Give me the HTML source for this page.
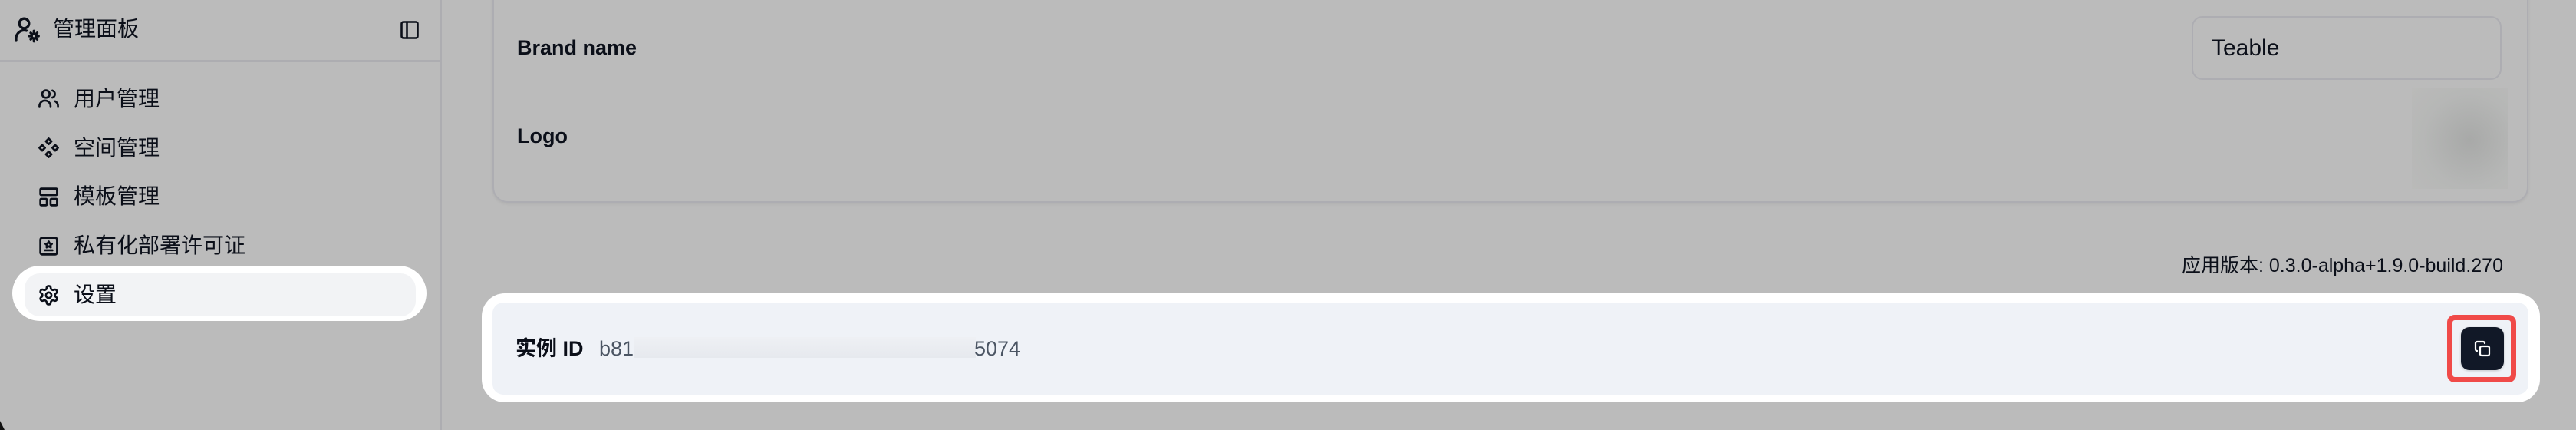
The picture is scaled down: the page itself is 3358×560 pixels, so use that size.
<!DOCTYPE html>
<html><head><meta charset="utf-8">
<style>
*{margin:0;padding:0;box-sizing:border-box}
html,body{width:3358px;height:560px;overflow:hidden;background:#bbbbbb;font-family:"Liberation Sans","Noto Sans CJK SC",sans-serif;color:#0b0f19}
.abs{position:absolute}
.side{left:0;top:0;width:576px;height:560px;border-right:3px solid #adadb1}
.sep{left:0;top:78px;width:575px;height:3px;background:#adadb1}
.t28{font-size:28px;line-height:32px;white-space:nowrap}
svg{position:absolute;fill:none;stroke:#0b0f19;stroke-width:2.2;stroke-linecap:round;stroke-linejoin:round}
</style></head><body>
<div class="abs side"></div>
<div class="abs sep"></div>
<svg style="left:18px;top:20px" width="36" height="36" viewBox="0 0 24 24" stroke-width="1.8"><circle cx="9" cy="7" r="4.2"/><path d="M2 22v-2a7 7 0 0 1 9-6.7"/><circle cx="17.5" cy="18" r="2"/><path d="M17.5 13.5v1.2M17.5 21.3v1.2M13.5 18h1.2M20.3 18h1.2M14.7 15.2l.9.9M19.4 19.9l.9.9M14.7 20.8l.9-.9M19.4 16.1l.9-.9"/></svg>
<div class="abs t28" style="left:69px;top:22px">管理面板</div>
<svg style="left:520px;top:25px" width="28" height="28" viewBox="0 0 24 24"><rect x="3" y="3" width="18" height="18" rx="2"/><path d="M9 3v18"/></svg>

<svg style="left:49px;top:114px" width="29" height="29" viewBox="0 0 24 24"><circle cx="9" cy="7" r="4"/><path d="M2 21v-1a6 6 0 0 1 12 0v1M16 3.2a4 4 0 0 1 0 7.6M22 21v-1a6 6 0 0 0-3-5.2"/></svg>
<div class="abs t28" style="left:96px;top:113px">用户管理</div>
<svg style="left:49px;top:178px" width="29" height="29" viewBox="0 0 24 24"><path d="M12 2l3 3-3 3-3-3zM19 9l3 3-3 3-3-3zM5 9l3 3-3 3-3-3zM12 16l3 3-3 3-3-3z"/></svg>
<div class="abs t28" style="left:96px;top:177px">空间管理</div>
<svg style="left:49px;top:242px" width="29" height="29" viewBox="0 0 24 24"><rect x="3" y="3" width="18" height="7" rx="1"/><rect x="3" y="14" width="7" height="7" rx="1"/><rect x="14" y="14" width="7" height="7" rx="1"/></svg>
<div class="abs t28" style="left:96px;top:240px">模板管理</div>
<svg style="left:49px;top:306px" width="29" height="29" viewBox="0 0 24 24"><rect x="3" y="3" width="18" height="18" rx="2"/><path d="M12 7l1.2 2.2 2.3.3-1.7 1.6.4 2.3-2.2-1.1-2.2 1.1.4-2.3-1.7-1.6 2.3-.3zM8 16.5h8"/></svg>
<div class="abs t28" style="left:96px;top:304px">私有化部署许可证</div>

<div class="abs" style="left:16px;top:346px;width:540px;height:72px;background:#fff;border-radius:36px"></div>
<div class="abs" style="left:32px;top:356px;width:510px;height:56px;background:#f2f3f5;border-radius:20px"></div>
<svg style="left:49px;top:370px" width="29" height="29" viewBox="0 0 24 24"><path d="M12.2 2h-.4a2 2 0 0 0-2 2v.2a2 2 0 0 1-1 1.7l-.4.3a2 2 0 0 1-2 0l-.2-.1a2 2 0 0 0-2.7.7l-.2.4a2 2 0 0 0 .7 2.7l.2.1a2 2 0 0 1 1 1.7v.5a2 2 0 0 1-1 1.7l-.2.1a2 2 0 0 0-.7 2.7l.2.4a2 2 0 0 0 2.7.7l.2-.1a2 2 0 0 1 2 0l.4.3a2 2 0 0 1 1 1.7v.2a2 2 0 0 0 2 2h.4a2 2 0 0 0 2-2v-.2a2 2 0 0 1 1-1.7l.4-.3a2 2 0 0 1 2 0l.2.1a2 2 0 0 0 2.7-.7l.2-.4a2 2 0 0 0-.7-2.7l-.2-.1a2 2 0 0 1-1-1.7v-.5a2 2 0 0 1 1-1.7l.2-.1a2 2 0 0 0 .7-2.7l-.2-.4a2 2 0 0 0-2.7-.7l-.2.1a2 2 0 0 1-2 0l-.4-.3a2 2 0 0 1-1-1.7V4a2 2 0 0 0-2-2z"/><circle cx="12" cy="12" r="3"/></svg>
<div class="abs t28" style="left:96px;top:368px">设置</div>
<div class="abs" style="left:0;top:548px;width:6px;height:12px;background:#111;clip-path:polygon(0 0,0 100%,100% 100%)"></div>

<!-- card -->
<div class="abs" style="left:642px;top:-30px;width:2654px;height:294px;border:2px solid #adadb2;border-radius:20px;box-shadow:0 2px 3px rgba(0,0,0,.06)"></div>
<div class="abs t28" style="left:674px;top:46px;font-weight:bold;font-size:27px">Brand name</div>
<div class="abs t28" style="left:674px;top:161px;font-weight:bold;font-size:27px">Logo</div>
<div class="abs" style="left:2857px;top:21px;width:404px;height:83px;border:2px solid #adadb2;border-radius:14px"></div>
<div class="abs t28" style="left:2883px;top:46px;font-size:30px;line-height:34px">Teable</div>
<div class="abs" style="left:3144px;top:114px;width:125px;height:132px;background:radial-gradient(circle at 60% 52%,#a8a9a8,#b6b7b6 60%,#babab9)"></div>

<div class="abs t28" style="right:95px;top:330px;font-size:25px">应用版本: 0.3.0-alpha+1.9.0-build.270</div>

<!-- instance id -->
<div class="abs" style="left:628px;top:382px;width:2683px;height:142px;background:#fff;border-radius:30px"></div>
<div class="abs" style="left:642px;top:394px;width:2654px;height:120px;background:#eff2f7;border-radius:14px"></div>
<div class="abs t28" style="left:672px;top:438px;font-weight:bold;font-size:27px">实例 ID</div>
<div class="abs t28" style="left:781px;top:438px;font-size:27px;color:#4b5563">b81</div>
<div class="abs" style="left:827px;top:439px;width:445px;height:27px;background:linear-gradient(#eef0f4,#e6e9ee)"></div>
<div class="abs t28" style="left:1270px;top:438px;font-size:27px;color:#4b5563">5074</div>
<div class="abs" style="left:3190px;top:410px;width:90px;height:88px;border:7px solid #f04a48;border-radius:10px"></div>
<div class="abs" style="left:3208px;top:426px;width:56px;height:56px;background:#111827;border-radius:11px;box-shadow:0 1px 3px rgba(0,0,0,.2)"></div>
<svg style="left:3224px;top:442px;stroke:#fff;stroke-width:2.2" width="24" height="24" viewBox="0 0 24 24"><rect x="9" y="9" width="12" height="12" rx="2"/><path d="M5 15a2 2 0 0 1-2-2V5a2 2 0 0 1 2-2h8a2 2 0 0 1 2 2"/></svg>
</body></html>
